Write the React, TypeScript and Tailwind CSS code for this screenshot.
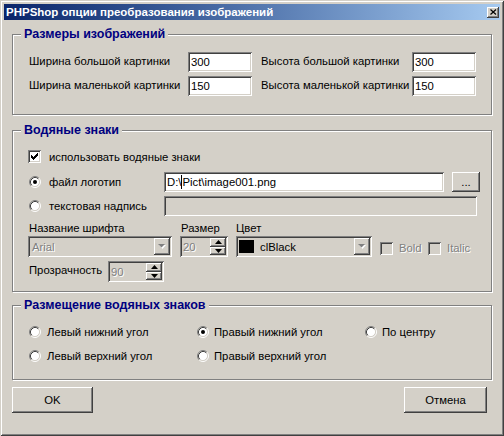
import React from "react";

const sunken =
  "shadow-[inset_1px_1px_0_#808080,inset_-1px_-1px_0_#ffffff,inset_2px_2px_0_#404040,inset_-2px_-2px_0_#d4d0c8]";
const raised =
  "shadow-[inset_-1px_-1px_0_#404040,inset_1px_1px_0_#ffffff,inset_-2px_-2px_0_#808080,inset_2px_2px_0_#d4d0c8]";
const disabledText = "text-[#808080] [text-shadow:1px_1px_0_#ffffff]";

function Radio({ checked }: { checked?: boolean }) {
  return (
    <svg width="12" height="12" viewBox="0 0 12 12" className="shrink-0">
      <circle cx="6" cy="6" r="4.5" fill="#ffffff" />
      <path d="M2.11 9.89A5.5 5.5 0 0 1 9.89 2.11" fill="none" stroke="#808080" />
      <path d="M9.89 2.11A5.5 5.5 0 0 1 2.11 9.89" fill="none" stroke="#ffffff" />
      <path d="M2.82 9.18A4.5 4.5 0 0 1 9.18 2.82" fill="none" stroke="#404040" />
      <path d="M9.18 2.82A4.5 4.5 0 0 1 2.82 9.18" fill="none" stroke="#d4d0c8" />
      {checked && <circle cx="6" cy="6" r="2" fill="#000000" />}
    </svg>
  );
}

const checkPixels: [number, number][] = [
  [6, 0],
  [5, 1], [6, 1],
  [0, 2], [4, 2], [5, 2], [6, 2],
  [0, 3], [1, 3], [3, 3], [4, 3], [5, 3],
  [0, 4], [1, 4], [2, 4], [3, 4], [4, 4],
  [1, 5], [2, 5], [3, 5],
  [2, 6],
];

function Check({ checked, disabled }: { checked?: boolean; disabled?: boolean }) {
  return (
    <div
      className={`relative w-[13px] h-[13px] shrink-0 ${sunken} ${
        disabled ? "bg-[#d4d0c8]" : "bg-white"
      }`}
    >
      {checked && (
        <svg width="13" height="13" className="absolute left-0 top-0">
          {checkPixels.map(([x, y], i) => (
            <rect key={i} x={x + 3} y={y + 3} width="1" height="1" fill="#000000" />
          ))}
        </svg>
      )}
    </div>
  );
}

function DropArrow({ disabled }: { disabled?: boolean }) {
  return (
    <div className={`w-[16px] h-full shrink-0 bg-[#d4d0c8] ${raised} flex items-center justify-center`}>
      <svg width="8" height="5" viewBox="0 0 8 5">
        {disabled && <path d="M1 1h7l-3.5 4z" fill="#ffffff" />}
        <path d="M0 0h7L3.5 3.5z" fill={disabled ? "#808080" : "#000000"} />
      </svg>
    </div>
  );
}

function SpinButtons() {
  return (
    <div className="w-[16px] h-full shrink-0 flex flex-col">
      <div className={`flex-1 bg-[#d4d0c8] ${raised} flex items-center justify-center`}>
        <svg width="7" height="4" viewBox="0 0 7 4">
          <path d="M3.5 0L7 4H0z" fill="#000000" />
        </svg>
      </div>
      <div className={`flex-1 bg-[#d4d0c8] ${raised} flex items-center justify-center`}>
        <svg width="7" height="4" viewBox="0 0 7 4">
          <path d="M0 0h7L3.5 4z" fill="#000000" />
        </svg>
      </div>
    </div>
  );
}

function Group({
  title,
  className,
  children,
}: {
  title: string;
  className?: string;
  children: React.ReactNode;
}) {
  return (
    <div
      className={`relative border border-[#808080] shadow-[1px_1px_0_#ffffff,inset_1px_1px_0_#ffffff] ${className ?? ""}`}
    >
      <div className="absolute left-[8px] top-[-8px] px-[3px] bg-[#d4d0c8] text-[#000080] font-bold text-[12.5px] leading-[14px] whitespace-nowrap">
        {title}
      </div>
      {children}
    </div>
  );
}

function TextField({ value, className }: { value: React.ReactNode; className?: string }) {
  return (
    <div className={`h-[20px] bg-white ${sunken} pl-[3px] flex items-center whitespace-nowrap ${className ?? ""}`}>
      {value}
    </div>
  );
}

function PushButton({ label, className }: { label: string; className?: string }) {
  return (
    <div className={`bg-[#d4d0c8] ${raised} flex items-center justify-center ${className ?? ""}`}>
      {label}
    </div>
  );
}

export default function App() {
  return (
    <div className="w-[504px] h-[436px] bg-[#d4d0c8] shadow-[inset_1px_1px_0_#d4d0c8,inset_-1px_-1px_0_#404040,inset_2px_2px_0_#ffffff,inset_-2px_-2px_0_#808080] p-[4px] flex flex-col font-['Liberation_Sans',Arial,sans-serif] text-[11.3px] leading-[14px] text-black overflow-hidden whitespace-nowrap">
      {/* Title bar */}
      <div className="h-[16px] shrink-0 bg-linear-to-r from-[#0a246a] to-[#a6caf0] flex items-center justify-between pl-[2px] pr-[1px]">
        <span className="text-white font-bold text-[11.5px] leading-[14px] whitespace-nowrap">
          PHPShop опции преобразования изображений
        </span>
        <div className={`w-[12px] h-[11px] bg-[#d4d0c8] ${raised} flex items-center justify-center`}>
          <svg width="7" height="6" viewBox="0 0 7 6">
            <path d="M0.5 0.5L6 5.5M6 0.5L0.5 5.5" stroke="#000000" strokeWidth="1.2" />
          </svg>
        </div>
      </div>

      <div className="px-[8px] flex flex-col">
        {/* Group 1 */}
        <Group title="Размеры изображений" className="mt-[14px] h-[81px] w-[480px]">
          <div className="pt-[17px] pl-[16px] flex flex-col gap-[4px]">
            <div className="flex items-center h-[20px]">
              <div className="w-[159px] -mt-[2px]">Ширина большой картинки</div>
              <TextField value="300" className="w-[64px]" />
              <div className="w-[151px] ml-[9px] -mt-[2px]">Высота большой картинки</div>
              <TextField value="300" className="w-[64px]" />
            </div>
            <div className="flex items-center h-[20px]">
              <div className="w-[159px] -mt-[2px]">Ширина маленькой картинки</div>
              <TextField value="150" className="w-[64px]" />
              <div className="w-[151px] ml-[9px] -mt-[2px]">Высота маленькой картинки</div>
              <TextField value="150" className="w-[64px]" />
            </div>
          </div>
        </Group>

        {/* Group 2 */}
        <Group title="Водяные знаки" className="mt-[15px] h-[162px] w-[480px]">
          <div className="pt-[19px] pl-[15px] flex flex-col">
            <div className="flex items-center h-[13px]">
              <Check checked />
              <span className="ml-[8px]">использовать водяные знаки</span>
            </div>
            <div className="flex items-center h-[20px] mt-[9px]">
              <div className="ml-[1px]">
                <Radio checked />
              </div>
              <div className="ml-[8px] w-[115px]">файл логотип</div>
              <TextField
                value={
                  <>
                    <span>D:\</span>
                    <span className="inline-block w-[1px] h-[14px] bg-black" />
                    <span>Pict\image001.png</span>
                  </>
                }
                className="w-[280px]"
              />
              <PushButton label="..." className="ml-[8px] w-[28px] h-[20px]" />
            </div>
            <div className="flex items-center h-[20px] mt-[4px]">
              <div className="ml-[1px]">
                <Radio />
              </div>
              <div className="ml-[8px] w-[115px]">текстовая надпись</div>
              <div className={`w-[313px] h-[20px] bg-[#d4d0c8] ${sunken}`} />
            </div>
            <div className="flex items-end h-[14px] mt-[5px]">
              <div className="w-[152px] pl-[1px]">Название шрифта</div>
              <div className="w-[56px] pl-[1px]">Размер</div>
              <div className="pl-[0px]">Цвет</div>
            </div>
            <div className="flex items-center h-[21px] mt-[1px]">
              <div className={`w-[144px] h-[21px] bg-[#d4d0c8] ${sunken} p-[2px] flex`}>
                <div className={`flex-1 pl-[2px] flex items-center ${disabledText}`}>Arial</div>
                <DropArrow disabled />
              </div>
              <div className={`ml-[8px] w-[48px] h-[21px] bg-[#d4d0c8] ${sunken} p-[2px] flex`}>
                <div className={`flex-1 pl-[1px] flex items-center ${disabledText}`}>20</div>
                <SpinButtons />
              </div>
              <div className={`ml-[8px] w-[136px] h-[21px] bg-[#d4d0c8] ${sunken} p-[2px] flex`}>
                <div className="flex-1 flex items-center">
                  <div className="ml-[1px] w-[15px] h-[13px] bg-black" />
                  <span className="ml-[6px]">clBlack</span>
                </div>
                <DropArrow disabled />
              </div>
              <div className="ml-[8px] flex items-center mt-[3px]">
                <Check disabled />
                <span className={`ml-[6px] w-[29px] ${disabledText}`}>Bold</span>
                <Check disabled />
                <span className={`ml-[6px] ${disabledText}`}>Italic</span>
              </div>
            </div>
            <div className="flex items-center h-[21px] mt-[4px]">
              <div className="w-[80px] pl-[1px] -mt-[3px]">Прозрачность</div>
              <div className={`w-[56px] h-[21px] bg-[#d4d0c8] ${sunken} p-[2px] flex`}>
                <div className={`flex-1 pl-[1px] flex items-center ${disabledText}`}>90</div>
                <SpinButtons />
              </div>
            </div>
          </div>
        </Group>

        {/* Group 3 */}
        <Group title="Размещение водяных знаков" className="mt-[13px] h-[75px] w-[480px]">
          <div className="pt-[18px] pl-[16px] grid grid-cols-[168px_168px_1fr] gap-y-[8px]">
            <div className="flex items-center h-[16px]">
              <Radio />
              <span className="ml-[6px]">Левый нижний угол</span>
            </div>
            <div className="flex items-center h-[16px]">
              <Radio checked />
              <span className="ml-[5px]">Правый нижний угол</span>
            </div>
            <div className="flex items-center h-[16px]">
              <Radio />
              <span className="ml-[5px]">По центру</span>
            </div>
            <div className="flex items-center h-[16px]">
              <Radio />
              <span className="ml-[6px]">Левый верхний угол</span>
            </div>
            <div className="flex items-center h-[16px]">
              <Radio />
              <span className="ml-[5px]">Правый верхний угол</span>
            </div>
            <div />
          </div>
        </Group>

        {/* Buttons */}
        <div className="mt-[7px] w-[480px] flex justify-between">
          <PushButton label="OK" className="w-[81px] h-[26px]" />
          <PushButton label="Отмена" className="w-[83px] h-[26px] mr-[5px]" />
        </div>
      </div>
    </div>
  );
}
